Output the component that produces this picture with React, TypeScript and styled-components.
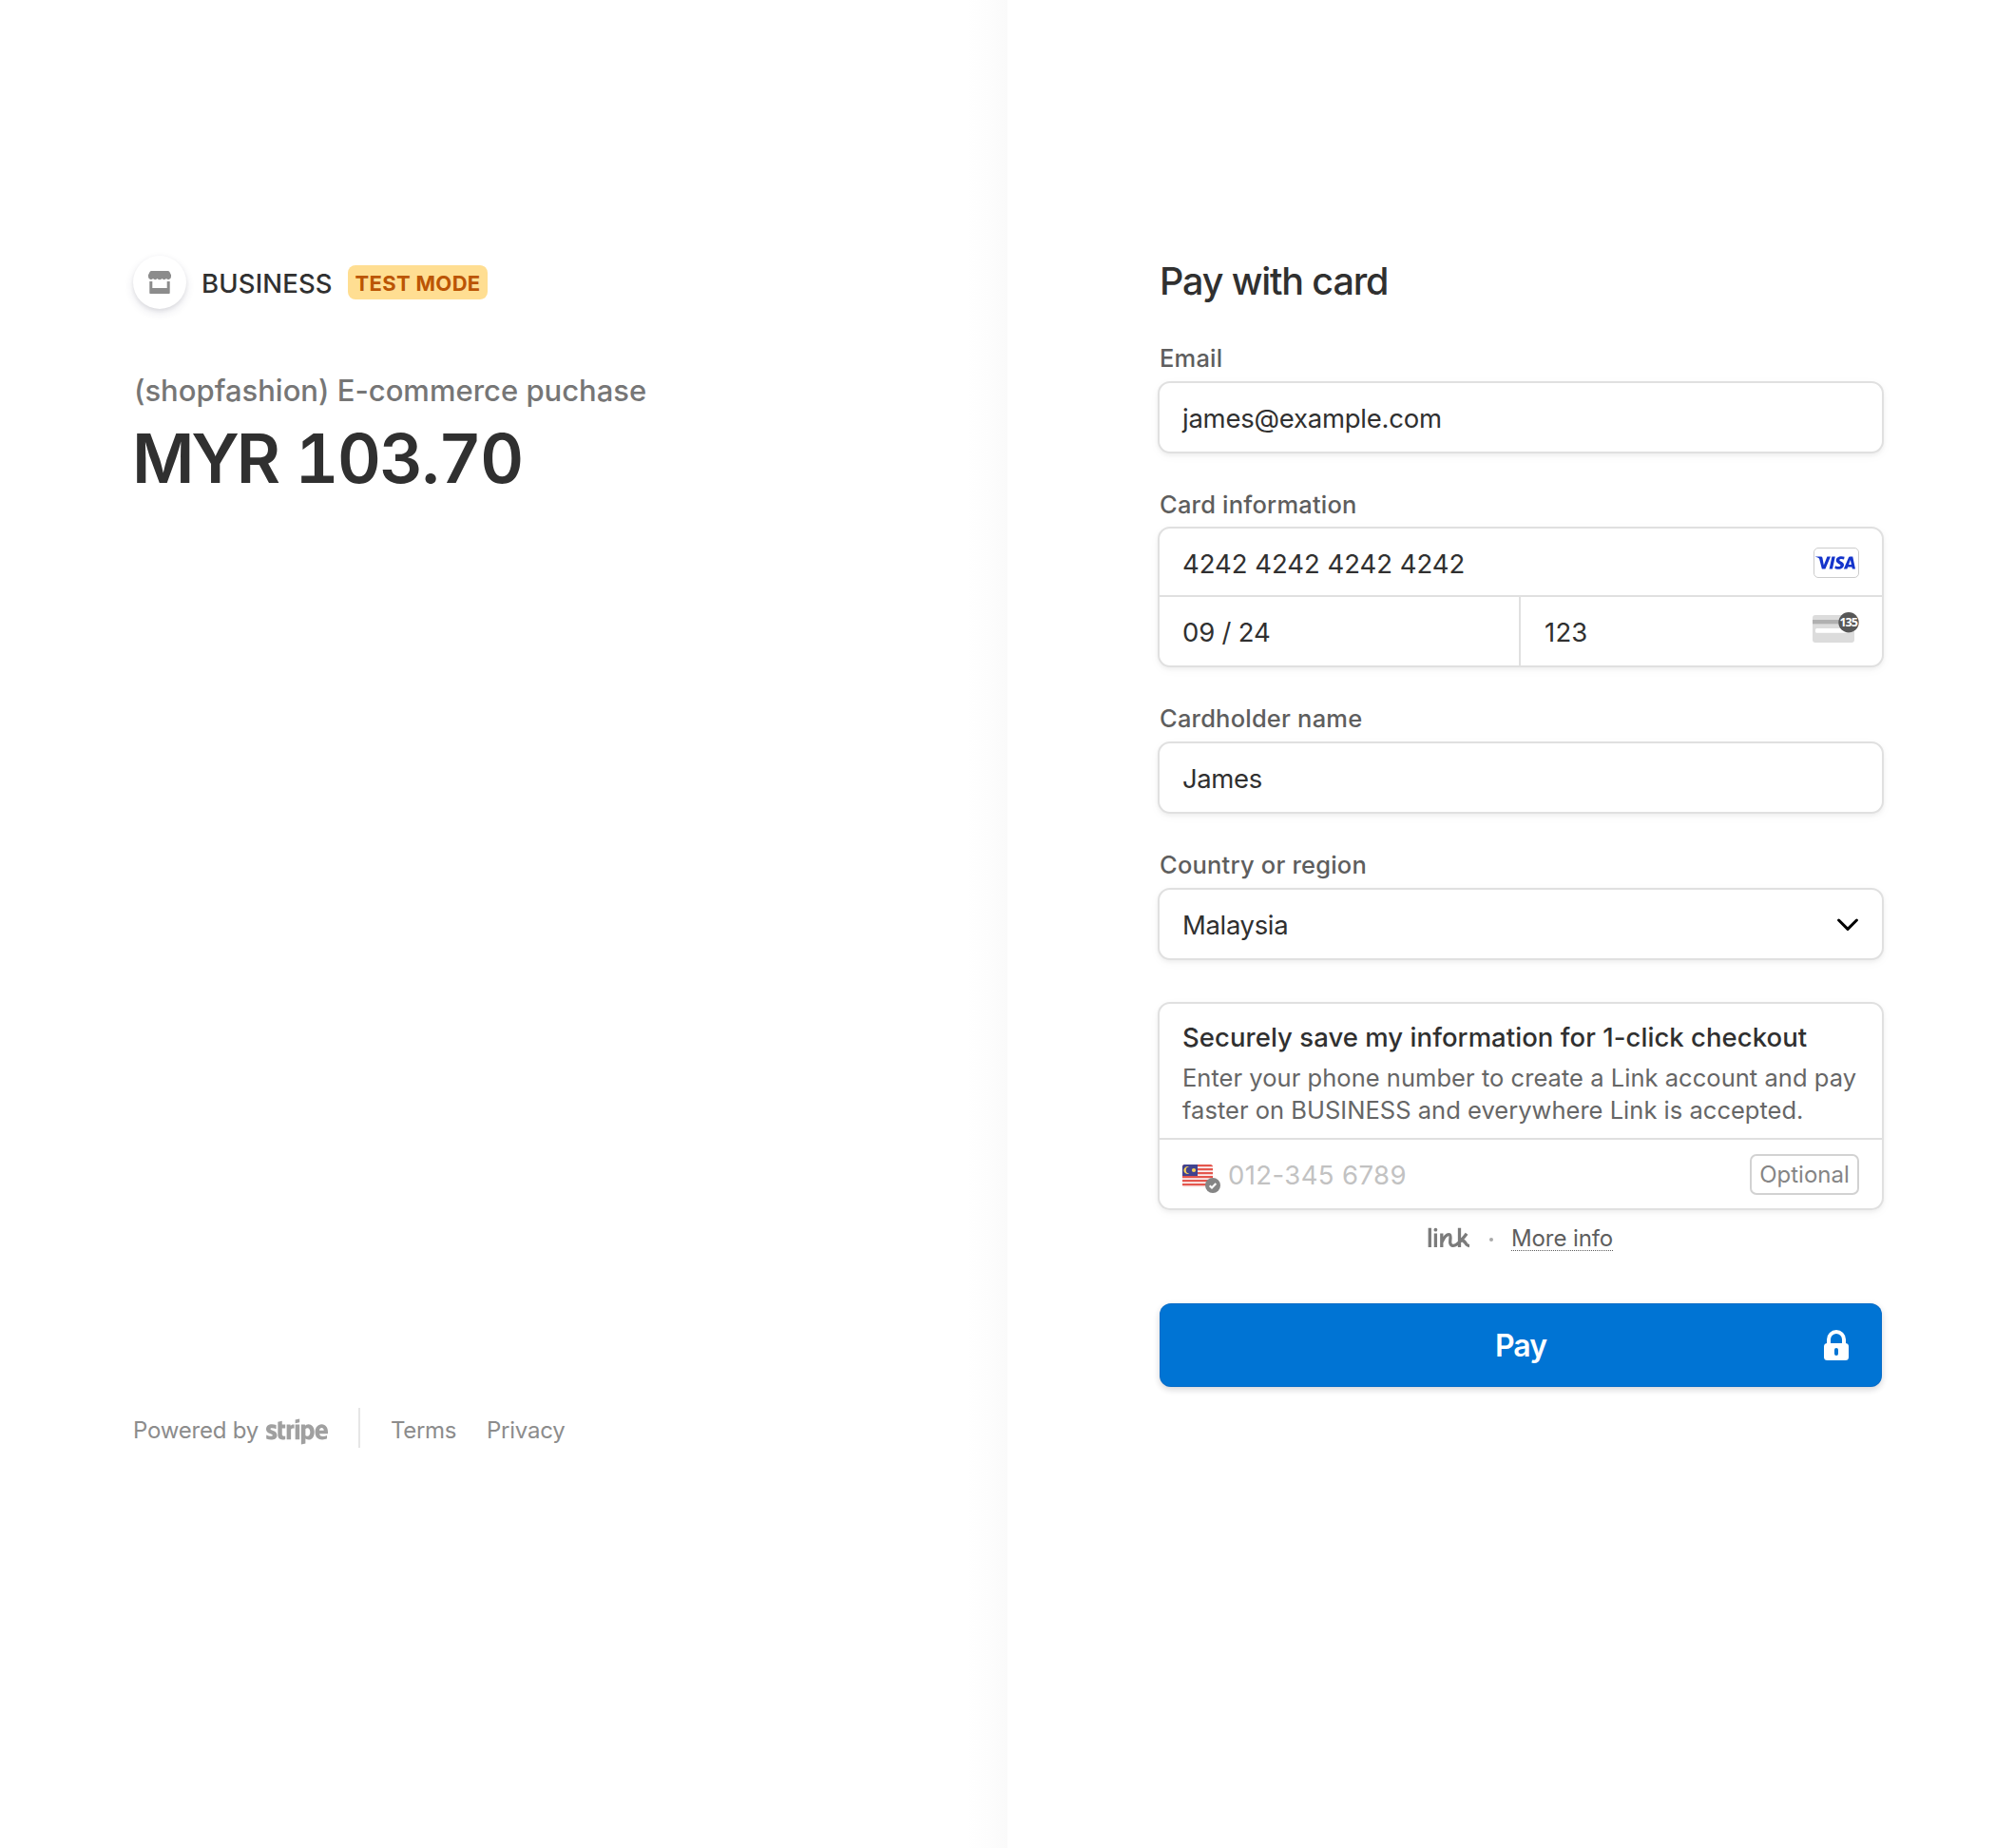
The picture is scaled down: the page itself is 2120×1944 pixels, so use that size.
import React from "react";
import styled, { createGlobalStyle } from "styled-components";
import { FaStripe } from "react-icons/fa";
import { SiVisa } from "react-icons/si";

const GlobalStyle = createGlobalStyle`
  *, *::before, *::after { box-sizing: border-box; }
  body {
    margin: 0;
    background: #ffffff;
    color: #303030;
    font-family: Inter, "Liberation Sans", sans-serif;
    -webkit-font-smoothing: antialiased;
  }
`;

const Page = styled.main`
  display: grid;
  grid-template-columns: 1060px 1060px;
  height: 1944px;
  overflow: hidden;
`;

const Summary = styled.section`
  padding: 269px 140px 0;
  background: linear-gradient(to right, #ffffff 1018px, #fdfdfd 1040px, #fafafa 1060px);
`;

const SummaryBody = styled.div`
  display: flex;
  flex-direction: column;
  justify-content: space-between;
  height: 1254px;
`;

const Merchant = styled.header`
  display: flex;
  align-items: center;
  width: 373px;
  height: 56px;
`;

const Avatar = styled.div`
  display: flex;
  align-items: center;
  justify-content: center;
  width: 56px;
  height: 56px;
  border-radius: 50%;
  background: #ffffff;
  box-shadow: 0 4px 10px rgba(50, 50, 93, 0.12), 0 2px 4px rgba(0, 0, 0, 0.07);
`;

interface TextProps {
  $size: number;
  $line: number;
  $weight?: number;
  $color?: string;
  $track?: number;
}

const Text = styled.span<TextProps>`
  display: block;
  margin: 0;
  white-space: nowrap;
  font-size: ${(p) => p.$size}px;
  line-height: ${(p) => p.$line}px;
  font-weight: ${(p) => p.$weight ?? 400};
  color: ${(p) => p.$color ?? "#303030"};
  letter-spacing: ${(p) => p.$track ?? 0}px;
`;

const MerchantName = styled(Text)`
  margin: 2px 0 0 16px;
`;

const TestBadge = styled.div`
  display: flex;
  align-items: center;
  justify-content: center;
  width: 147px;
  height: 36px;
  margin-left: auto;
  padding-top: 2px;
  border-radius: 8px;
  background: #ffde92;
`;

const Product = styled(Text)`
  margin: 66px 0 11px 1px;
`;

const Amount = styled(Text)`
  margin-left: -1px;
`;

const Digits = styled.span`
  margin-left: 4px;
  font-variant-numeric: tabular-nums;
  letter-spacing: -1.6px;
`;

const Footer = styled.footer`
  display: flex;
  align-items: center;
  height: 42px;
`;

const FooterText = styled(Text)<{ $width: number }>`
  width: ${(p) => p.$width}px;
  padding-top: 6px;
`;

const StripeMark = styled.div`
  display: flex;
  align-items: center;
  width: 65px;
  height: 42px;
  margin-right: 32px;
  padding-top: 8px;
  color: #a0a0a0;

  svg { width: 65px; height: 52px; flex: none; }
`;

const FooterRule = styled.div`
  width: 2px;
  height: 42px;
  margin-right: 32px;
  background: #e6e6e6;
`;

const Payment = styled.section`
  display: flex;
  flex-direction: column;
  padding: 272px 138px 0 158px;
  background: #ffffff;
`;

const Title = styled(Text)`
  margin-left: 2px;
`;

const Field = styled.div<{ $top: number; $gap?: number }>`
  margin-top: ${(p) => p.$top}px;
  display: flex;
  flex-direction: column;
  gap: ${(p) => p.$gap ?? 7}px;
`;

const Label = styled(Text)`
  margin-left: 2px;
`;

const Box = styled.div<{ $height: number }>`
  display: flex;
  flex-direction: column;
  height: ${(p) => p.$height}px;
  border: 2px solid #e0e0e0;
  border-radius: 13px;
  background: #ffffff;
  box-shadow: 0 2px 4px rgba(0, 0, 0, 0.05), 0 3px 12px rgba(0, 0, 0, 0.03);
`;

const Row = styled.div`
  display: flex;
  align-items: center;
  justify-content: space-between;
  flex: 1;
  padding: 2px 25px 0 24px;
`;

const NumberRow = styled(Row)`
  flex: none;
  height: 72px;
  padding: 3px 24px 0;
  border-bottom: 2px solid #e0e0e0;
`;

const SplitRow = styled.div`
  display: grid;
  grid-template-columns: 380px 1fr;
  flex: 1;
`;

const Cell = styled.div<{ $ruled?: boolean }>`
  display: flex;
  align-items: center;
  justify-content: space-between;
  padding: 2px 24px 0 ${(p) => (p.$ruled ? 24 : 25)}px;
  border-right: ${(p) => (p.$ruled ? "2px solid #e0e0e0" : "none")};

  svg { margin-bottom: 11px; }
`;

const VisaBadge = styled.div`
  display: flex;
  align-items: center;
  justify-content: center;
  width: 48px;
  height: 32px;
  margin-bottom: 1px;
  border: 1px solid #cccccc;
  border-radius: 5px;
  color: #1434cb;

  svg { width: 42px; height: 42px; flex: none; margin-right: 2px; }
`;

const LinkSection = styled.div`
  margin-top: 44px;
`;

const LinkCopy = styled.div`
  height: 143px;
  padding: 17px 0 0 24px;
  border-bottom: 2px solid #e0e0e0;
`;

const LinkTitle = styled(Text)`
  margin-bottom: 8px;
`;

const PhoneRow = styled.div`
  display: flex;
  align-items: center;
  flex: 1;
  padding: 1px 24px 0;
`;

const Flag = styled.div`
  width: 48px;
  height: 32px;
  padding-top: 5px;

  svg { display: block; }
`;

const Phone = styled(Text)`
  padding-top: 1px;
`;

const Optional = styled.div`
  display: flex;
  align-items: center;
  justify-content: center;
  width: 115px;
  height: 43px;
  margin-left: auto;
  border: 2px solid #d2d2d2;
  border-radius: 7px;
`;

const LinkRow = styled.div`
  display: flex;
  align-items: center;
  height: 32px;
  margin-top: 13px;
  padding-left: 284px;
`;

const Dot = styled.div`
  width: 4px;
  height: 4px;
  margin: 3px 19px 0 20px;
  border-radius: 50%;
  background: #a9a9a9;
`;

const MoreInfo = styled.a`
  width: 107px;
  height: 29px;
  margin-top: -1px;
  border-bottom: 1px dotted #5e5e5e;
`;

const PayButton = styled.button`
  display: grid;
  grid-template-columns: 1fr auto 1fr;
  align-items: center;
  height: 88px;
  margin: 53px 2px 0;
  padding: 0 35px;
  border: 0;
  border-radius: 12px;
  background: #0074d4;
  font-family: inherit;
  box-shadow: inset 0 0 0 1px rgba(30, 80, 160, 0.22), 0 3px 6px rgba(0, 0, 0, 0.12), 0 2px 10px rgba(50, 50, 93, 0.06);

  svg { justify-self: end; }
`;

const PayLabel = styled(Text)`
  padding-top: 2px;
`;

const StoreIcon = () => (
  <svg width="24" height="24" viewBox="0 0 24 24" fill="#8c8c8c">
    <path d="M3.4 0h17.2c.8 0 1.4.4 1.8 1L24 4.2v1.9a2.9 2.9 0 0 1-5 2 2.9 2.9 0 0 1-4.6 0 3 3 0 0 1-4.8 0 2.9 2.9 0 0 1-4.6 0 2.9 2.9 0 0 1-5-2V4.2L1.6 1C2 .4 2.600 0 3.400 0z" />
    <path d="M1.300 11h3v7h15.400v-7h3v12c0 .6-.4 1-1 1H2.300c-.6 0-1-.4-1-1z" />
  </svg>
);

const CvcIcon = () => (
  <svg width="50" height="32" viewBox="0 0 50 32">
    <rect x="1" y="3" width="44" height="29" rx="3" fill="#dcdcdc" />
    <rect x="1" y="8" width="44" height="4.300" fill="#b0b0b0" />
    <rect x="4" y="17" width="38" height="4.800" rx="1.500" fill="#ffffff" />
    <circle cx="39" cy="10.700" r="10.700" fill="#575757" />
    <text x="38.700" y="15.200" textAnchor="middle" fontFamily="Open Sans, sans-serif" fontSize="12.500" fontWeight="700" letterSpacing="-1" fill="#ffffff">135</text>
  </svg>
);

const FlagIcon = () => (
  <svg width="41" height="31" viewBox="0 0 41 31">
    <defs>
      <clipPath id="flag-shape">
        <rect width="32" height="24" rx="2.500" />
      </clipPath>
    </defs>
    <g clipPath="url(#flag-shape)">
      <rect width="32" height="24" fill="#fbeeee" />
      {[0, 4, 8, 12, 16, 20].map((y) => (
        <rect key={y} y={y} width="32" height="2.200" fill="#e4564d" />
      ))}
      <rect width="16" height="12" fill="#41438f" />
      <path d="M7.200 2.600A3.900 3.900 0 1 0 7.200 9.400 3.300 3.300 0 0 1 7.200 2.600z" fill="#f7cf58" />
      <circle cx="12" cy="6" r="2.100" fill="#f7cf58" />
    </g>
    <circle cx="32" cy="22" r="8" fill="#858585" />
    <path d="M28.700 22.200l2.300 2.300 4.300-4.500" fill="none" stroke="#ffffff" strokeWidth="2.200" />
  </svg>
);

const ChevronIcon = () => (
  <svg width="22" height="14" viewBox="0 0 22 14" fill="none" stroke="#000000" strokeWidth="3" strokeLinecap="round" strokeLinejoin="round">
    <path d="M1.600 2l9.400 9.400L20.400 2" />
  </svg>
);

const LinkLogo = () => (
  <svg width="45" height="22" viewBox="0 0 45 22" fill="none" stroke="#7b7b7b" strokeWidth="3.300">
    <path d="M2.300 .8v20.200M8.400 6.500v14.500" />
    <circle cx="8.400" cy="2.700" r="1.900" fill="#7b7b7b" stroke="none" />
    <path d="M14.800 6.500v14.500M14.800 16c2.400-5 5.200-9 8.200-8.200 2.200.8.200 6.200.8 9 .5 2.800 3.600 3.600 6.800 1.200 4-3 7.200-6.800 10.500-11.300M33.500 .8v20.200M34.800 13.500c2.600 0 3.800 1.200 5 3 1 1.700 2 3 4.200 3.100" />
  </svg>
);

const LockIcon = () => (
  <svg width="26" height="32" viewBox="0 0 26 32">
    <path d="M5 15v-5a8 8 0 0 1 16 0v5" fill="none" stroke="#ffffff" strokeWidth="4" />
    <rect y="14" width="26" height="18" rx="3.500" fill="#ffffff" />
    <rect x="11" y="19" width="4" height="8" rx="2" fill="#0074d4" />
  </svg>
);

const FieldLabel = ({ children }: { children: string }) => (
  <Label as="label" $size={25.5} $line={34} $weight={500} $color="#5e5e5e" $track={0.2}>
    {children}
  </Label>
);

const Value = ({ children, track }: { children: string; track?: number }) => (
  <Text $size={27.5} $line={36} $track={track}>
    {children}
  </Text>
);

export default function App() {
  return (
    <>
      <GlobalStyle />
      <Page>
        <Summary>
          <SummaryBody>
            <div>
              <Merchant>
                <Avatar>
                  <StoreIcon />
                </Avatar>
                <MerchantName as="h1" $size={27.5} $line={34} $weight={500} $track={0.15}>BUSINESS</MerchantName>
                <TestBadge>
                  <Text $size={22} $line={28} $weight={700} $color="#bb5504" $track={0.35}>TEST MODE</Text>
                </TestBadge>
              </Merchant>
              <Product $size={31} $line={40} $weight={500} $color="#767676">(shopfashion) E-commerce puchase</Product>
              <Amount $size={71} $line={80} $weight={600} $track={-3.2}>
                MYR <Digits>103.70</Digits>
              </Amount>
            </div>
            <Footer>
              <FooterText $width={140} $size={24} $line={34} $color="#8c8c8c" $track={-0.2}>Powered by</FooterText>
              <StripeMark>
                <FaStripe />
              </StripeMark>
              <FooterRule />
              <FooterText $width={101} $size={24} $line={34} $color="#8c8c8c" $track={-0.35}>Terms</FooterText>
              <FooterText $width={90} $size={24} $line={34} $color="#8c8c8c" $track={-0.25}>Privacy</FooterText>
            </Footer>
          </SummaryBody>
        </Summary>

        <Payment>
          <Title as="h2" $size={39.5} $line={48} $weight={530} $track={-1.15}>Pay with card</Title>

          <Field $top={40}>
            <FieldLabel>Email</FieldLabel>
            <Box $height={76}>
              <Row>
                <Value track={-0.25}>james@example.com</Value>
              </Row>
            </Box>
          </Field>

          <Field $top={37} $gap={6}>
            <FieldLabel>Card information</FieldLabel>
            <Box $height={148}>
              <NumberRow>
                <Value track={-0.03}>4242 4242 4242 4242</Value>
                <VisaBadge>
                  <SiVisa />
                </VisaBadge>
              </NumberRow>
              <SplitRow>
                <Cell $ruled>
                  <Value track={-0.2}>09 / 24</Value>
                </Cell>
                <Cell>
                  <Value track={0.2}>123</Value>
                  <CvcIcon />
                </Cell>
              </SplitRow>
            </Box>
          </Field>

          <Field $top={37}>
            <FieldLabel>Cardholder name</FieldLabel>
            <Box $height={76}>
              <Row>
                <Value track={-0.4}>James</Value>
              </Row>
            </Box>
          </Field>

          <Field $top={37}>
            <FieldLabel>Country or region</FieldLabel>
            <Box $height={76}>
              <Row>
                <Value track={-0.35}>Malaysia</Value>
                <ChevronIcon />
              </Row>
            </Box>
          </Field>

          <LinkSection>
            <Box $height={219}>
              <LinkCopy>
                <LinkTitle $size={27.5} $line={36} $weight={510} $track={0.05}>Securely save my information for 1-click checkout</LinkTitle>
                <Text $size={25.5} $line={34} $color="#666666" $track={0.04}>Enter your phone number to create a Link account and pay</Text>
                <Text $size={25.5} $line={34} $color="#666666" $track={0.02}>faster on BUSINESS and everywhere Link is accepted.</Text>
              </LinkCopy>
              <PhoneRow>
                <Flag>
                  <FlagIcon />
                </Flag>
                <Phone $size={27.5} $line={36} $color="#c2c2c2" $track={0.4}>012-345 6789</Phone>
                <Optional>
                  <Text $size={24} $line={34} $color="#858585">Optional</Text>
                </Optional>
              </PhoneRow>
            </Box>
            <LinkRow>
              <LinkLogo />
              <Dot />
              <MoreInfo>
                <Text $size={24} $line={31} $color="#5e5e5e" $track={-0.1}>More info</Text>
              </MoreInfo>
            </LinkRow>
          </LinkSection>

          <PayButton type="button">
            <span />
            <PayLabel $size={32} $line={40} $weight={570} $color="#ffffff" $track={-1}>Pay</PayLabel>
            <LockIcon />
          </PayButton>
        </Payment>
      </Page>
    </>
  );
}
